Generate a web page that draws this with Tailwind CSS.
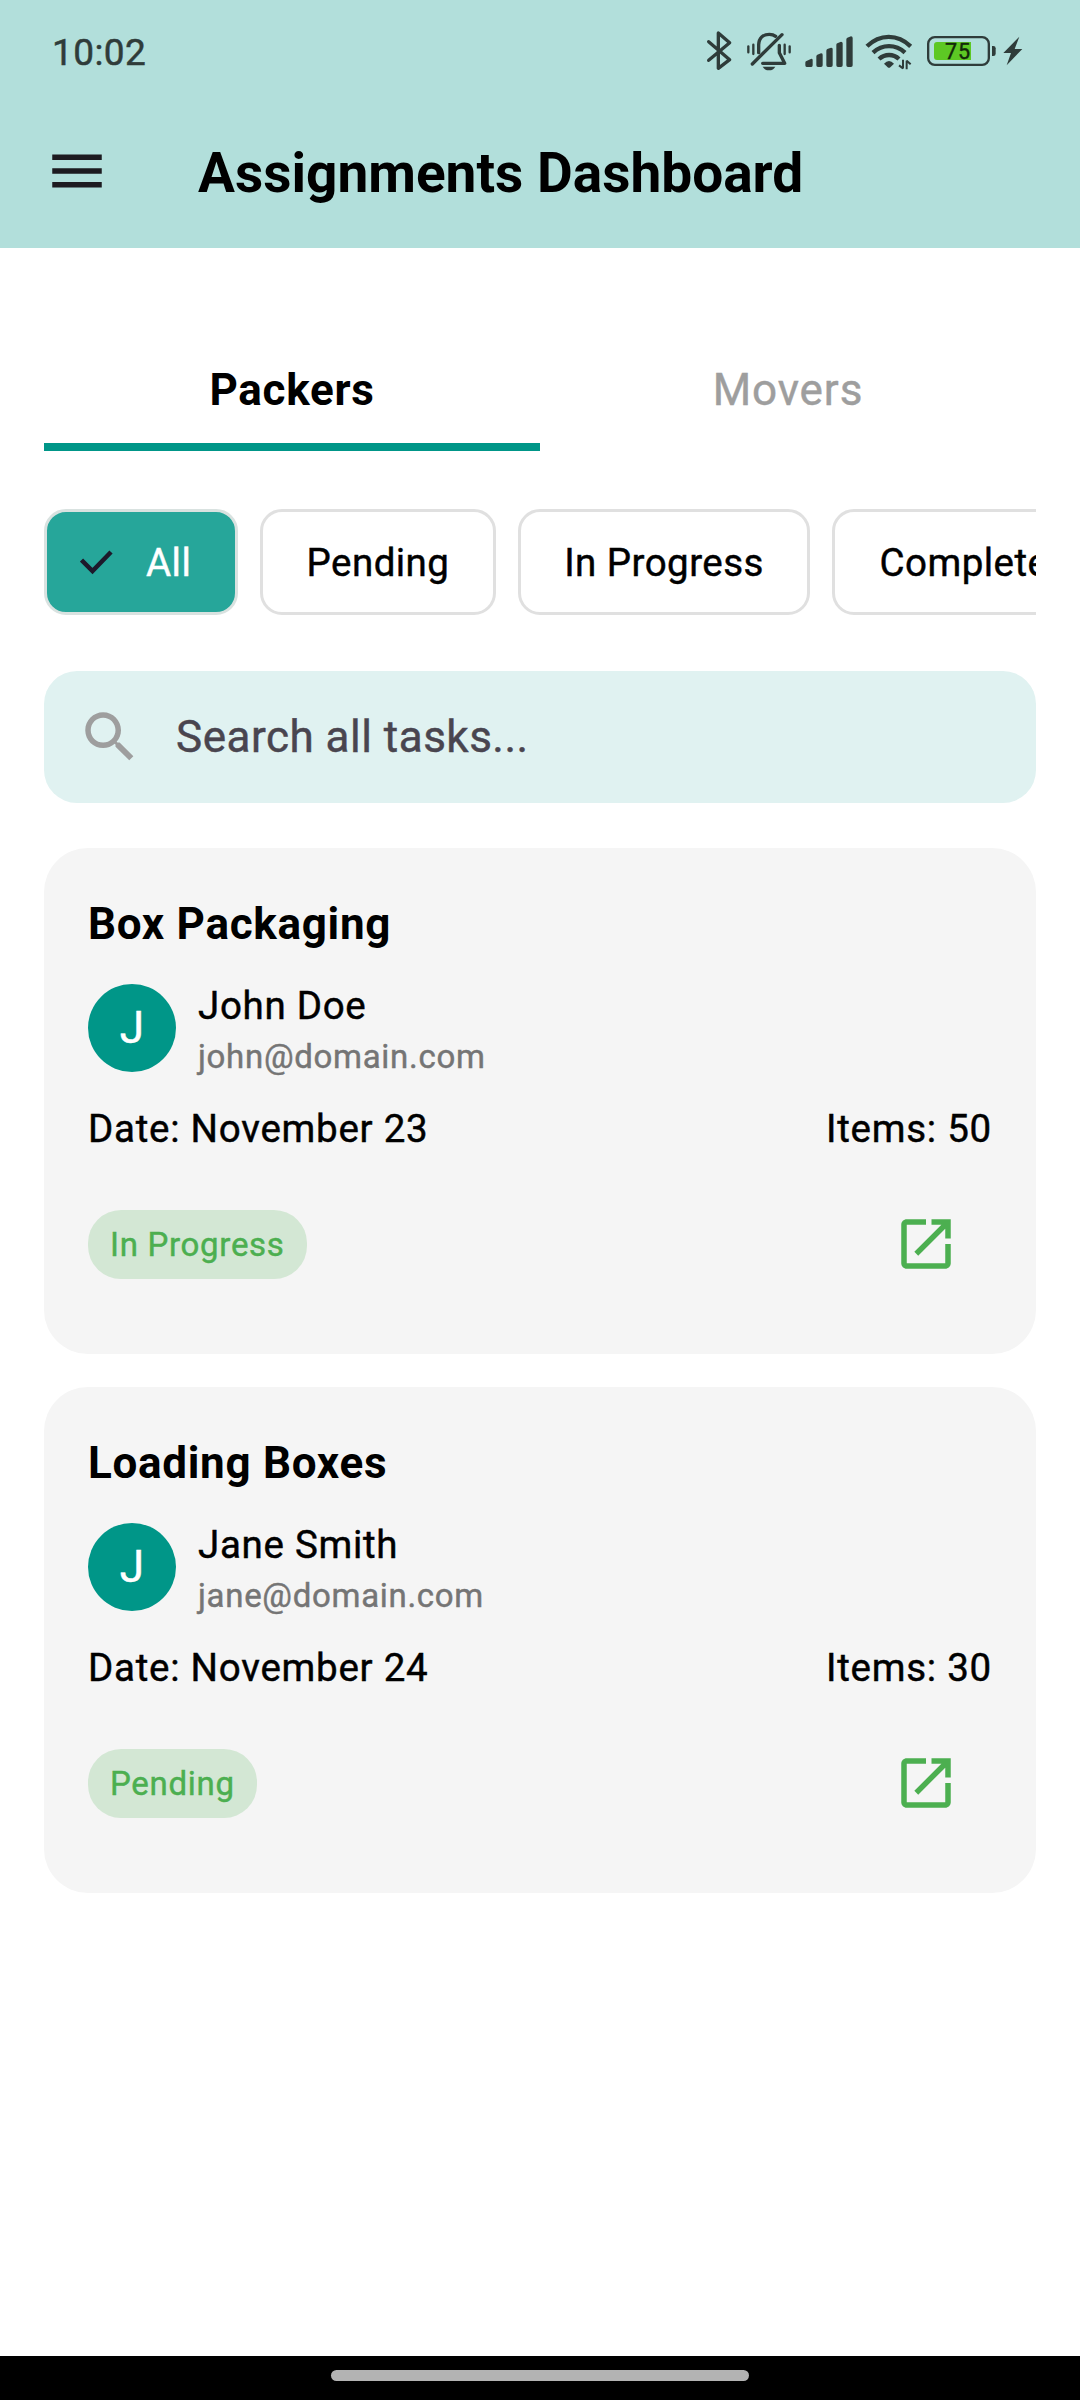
<!DOCTYPE html>
<html lang="en">
<head>
<meta charset="utf-8">
<title>Assignments Dashboard</title>
<script src="https://cdn.jsdelivr.net/npm/@tailwindcss/browser@4"></script>
</head>
<body class="bg-white">
<div class="w-[1080px] h-[2400px] flex flex-col overflow-hidden bg-white text-black font-[Roboto,sans-serif]">

  <header class="h-[248px] shrink-0 bg-[#b2dfdb]">
    <!-- Status bar -->
    <div class="h-[94px] flex text-[#2f3c3a]">
      <div class="pl-[52px] pt-[31px] text-[37px] leading-[44px] tracking-[0.4px] [-webkit-text-stroke:0.5px]">10:02</div>
      <div class="ml-auto pr-[57px] pt-[30px] flex">
        <svg class="w-[28px] h-[42px]" viewBox="78 60 84 126" fill="none" stroke="currentColor" stroke-width="10" stroke-linejoin="round" stroke-linecap="round"><path d="M86 95L149 149L115 175V69L149 98L86 151"/></svg>
        <svg class="w-[46px] h-[42px] ml-[12px]" viewBox="198 60 138 126" fill="none" stroke="currentColor" stroke-width="10" stroke-linecap="round"><path d="M306 74L217 162"/><path d="M236 128V104C237 84 249 73 268 73C276 73 282 75 287 79"/><path d="M298 106V128L314 160H248" stroke-linejoin="round"/><path d="M248 170H286C282 177 276 181 267 181S252 177 248 170Z" fill="currentColor" stroke="none"/><path d="M205 109V127M220 104V132M314 104V132M329 109V127" stroke-width="7"/></svg>
        <svg class="w-[50px] h-[42px] ml-[12px]" viewBox="372 60 150 126" fill="currentColor"><path d="M378 154L394 146Q398 146 398 150V166Q398 171 394 171H380Q376 171 376 166V158Q376 155 378 154ZM409 139Q409 136 412 134L423 130Q428 130 428 134V166Q428 171 423 171H414Q409 171 409 166ZM439 122Q439 119 442 117L453 113Q458 113 458 117V166Q458 171 453 171H444Q439 171 439 166ZM469 104Q469 101 472 100L483 95Q488 95 488 100V166Q488 171 483 171H474Q469 171 469 166ZM499 88Q499 85 502 83L513 79Q518 79 518 84V166Q518 171 513 171H504Q499 171 499 166Z"/></svg>
        <svg class="w-[48px] h-[42px] ml-[11px]" viewBox="555 60 144 126" fill="none" stroke="currentColor" stroke-width="13"><path d="M561 109C599 71 653 71 692 109M579 128C607 102 647 102 675 128M597 147C615 131 640 131 657 147"/><path d="M612 161Q627 145 642 161L631 172Q627 175 623 172Z" fill="currentColor" stroke="none"/><path d="M669 149V175L657 166M680 178V152L692 163" stroke-width="6" stroke-linejoin="bevel"/></svg>
        <div class="relative w-[70px] h-[42px] ml-[13px]">
          <svg class="w-[70px] h-[42px]" viewBox="738 60 210 126" fill="none" stroke="currentColor"><rect x="744.500" y="81.500" width="182" height="83" rx="20" stroke-width="7"/><path d="M771 96H873V150H771Q762 150 762 141V105Q762 96 771 96Z" fill="#5dc824" stroke="none"/><path d="M936 108H940Q947 108 947 115V131Q947 138 940 138H936Z" fill="currentColor" stroke="none"/></svg>
          <span class="absolute left-[19px] top-[10px] text-[21.5px] leading-[24px] tracking-[0.8px] text-[#12280b] [-webkit-text-stroke:0.4px]">75</span>
        </div>
        <svg class="w-[20px] h-[42px] ml-[7px]" viewBox="968 60 60 126" fill="currentColor"><path d="M1017 80L969 129H992L979 166L1026 117H1003Z"/></svg>
      </div>
    </div>
    <!-- App bar -->
    <div class="h-[154px] flex items-center pl-[44px]">
      <svg class="w-[66px] h-[66px] shrink-0" viewBox="0 0 24 24" fill="#1d1b20"><path d="M3 18h18v-2H3v2zm0-5h18v-2H3v2zm0-7v2h18V6H3z"/></svg>
      <h1 class="ml-[88px] pt-1 text-[55px] leading-[70px] font-bold">Assignments Dashboard</h1>
    </div>
  </header>

  <main class="flex-1 px-[44px] pt-[72px] [-webkit-text-stroke:0.45px]">
    <!-- Tabs -->
    <div class="grid grid-cols-2 h-[131px] text-[44px] leading-[52px] text-center">
      <div class="border-b-8 border-[#009688] pt-[44px] font-bold tracking-[0.7px] [-webkit-text-stroke:0px]">Packers</div>
      <div class="pt-[44px] text-[#9e9e9e] tracking-[0.9px]">Movers</div>
    </div>

    <!-- Filter chips -->
    <div class="mt-[58px] flex gap-[22px] overflow-hidden text-[38.5px] leading-[55px] tracking-[0.45px] whitespace-nowrap">
      <div class="w-[194px] h-[106px] shrink-0 flex items-center rounded-[22px] border-3 border-[#d9e2e0] bg-[#26a69a] text-white">
        <svg class="w-[33px] h-[26px] ml-[33px]" viewBox="0 0 33 26" fill="none" stroke="#1d192b" stroke-width="4.500"><path d="M1.500 11L12.500 22L31 3"/></svg>
        <span class="ml-[33px]">All</span>
      </div>
      <div class="w-[236px] h-[106px] shrink-0 flex items-center justify-center rounded-[22px] border-3 border-[#e0e0e0]">Pending</div>
      <div class="w-[292px] h-[106px] shrink-0 flex items-center justify-center rounded-[22px] border-3 border-[#e0e0e0]">In Progress</div>
      <div class="w-[286px] h-[106px] shrink-0 flex items-center justify-center rounded-[22px] border-3 border-[#e0e0e0]">Completed</div>
    </div>

    <!-- Search -->
    <div class="mt-[56px] h-[132px] flex items-center rounded-[33px] bg-[#e0f2f1] pl-[33px]">
      <svg class="w-[66px] h-[66px]" viewBox="0 0 24 24" fill="#9e9e9e"><path d="M15.500 14h-.79l-.28-.27C15.410 12.590 16 11.110 16 9.500 16 5.910 13.090 3 9.500 3S3 5.910 3 9.500 5.910 16 9.500 16c1.610 0 3.090-.59 4.230-1.570l.27.28v.79l5 4.990L20.490 19l-4.990-5zm-6 0C7.010 14 5 11.990 5 9.500S7.010 5 9.500 5 14 7.010 14 9.500 11.990 14 9.500 14z"/></svg>
      <span class="ml-[33px] text-[44px] leading-[66px] tracking-[0.5px] text-[#49454f]">Search all tasks...</span>
    </div>

    <!-- Box Packaging -->
    <section class="mt-[45px] h-[506px] rounded-[44px] bg-[#f5f5f5] p-[44px]">
      <h2 class="text-[44px] leading-[64px] font-bold tracking-[0.7px] [-webkit-text-stroke:0px]">Box Packaging</h2>
      <div class="mt-[22px] h-[101px] flex items-center">
        <div class="w-[88px] h-[88px] mb-px rounded-full bg-[#009688] flex items-center justify-center text-white text-[44px] leading-[52px] pb-px">J</div>
        <div class="ml-[22px]">
          <div class="text-[38.5px] leading-[56px] tracking-[0.7px]">John Doe</div>
          <div class="text-[33px] leading-[45px] tracking-[0.7px] text-[#757575]">john@domain.com</div>
        </div>
      </div>
      <div class="mt-[22px] flex justify-between text-[38.5px] leading-[55px] tracking-[0.75px]">
        <span>Date: November 23</span><span>Items: 50</span>
      </div>
      <div class="mt-[22px] h-[132px] flex items-center justify-between">
        <span class="h-[69px] px-[22px] pt-px flex items-center rounded-[33px] bg-[#d3e7d4] text-[#4caf50] text-[33px] tracking-[0.7px]">In Progress</span>
        <svg class="w-[66px] h-[66px] mr-[33px]" viewBox="0 0 24 24" fill="#4caf50"><path d="M19 19H5V5h7V3H5c-1.110 0-2 .9-2 2v14c0 1.100.89 2 2 2h14c1.100 0 2-.9 2-2v-7h-2v7zM14 3v2h3.590l-9.830 9.830 1.410 1.410L19 6.410V10h2V3h-7z"/></svg>
      </div>
    </section>

    <!-- Loading Boxes -->
    <section class="mt-[33px] h-[506px] rounded-[44px] bg-[#f5f5f5] p-[44px]">
      <h2 class="text-[44px] leading-[64px] font-bold tracking-[0.7px] [-webkit-text-stroke:0px]">Loading Boxes</h2>
      <div class="mt-[22px] h-[101px] flex items-center">
        <div class="w-[88px] h-[88px] mb-px rounded-full bg-[#009688] flex items-center justify-center text-white text-[44px] leading-[52px] pb-px">J</div>
        <div class="ml-[22px]">
          <div class="text-[38.5px] leading-[56px] tracking-[0.7px]">Jane Smith</div>
          <div class="text-[33px] leading-[45px] tracking-[0.7px] text-[#757575]">jane@domain.com</div>
        </div>
      </div>
      <div class="mt-[22px] flex justify-between text-[38.5px] leading-[55px] tracking-[0.75px]">
        <span>Date: November 24</span><span>Items: 30</span>
      </div>
      <div class="mt-[22px] h-[132px] flex items-center justify-between">
        <span class="h-[69px] px-[22px] pt-px flex items-center rounded-[33px] bg-[#d3e7d4] text-[#4caf50] text-[33px] tracking-[0.7px]">Pending</span>
        <svg class="w-[66px] h-[66px] mr-[33px]" viewBox="0 0 24 24" fill="#4caf50"><path d="M19 19H5V5h7V3H5c-1.110 0-2 .9-2 2v14c0 1.100.89 2 2 2h14c1.100 0 2-.9 2-2v-7h-2v7zM14 3v2h3.590l-9.830 9.830 1.410 1.410L19 6.410V10h2V3h-7z"/></svg>
      </div>
    </section>
  </main>

  <!-- Gesture bar -->
  <footer class="h-[44px] shrink-0 bg-black flex justify-center pt-[14px]">
    <div class="w-[418px] h-[11px] rounded-full bg-[#b3b3b3]"></div>
  </footer>
</div>
</body>
</html>
